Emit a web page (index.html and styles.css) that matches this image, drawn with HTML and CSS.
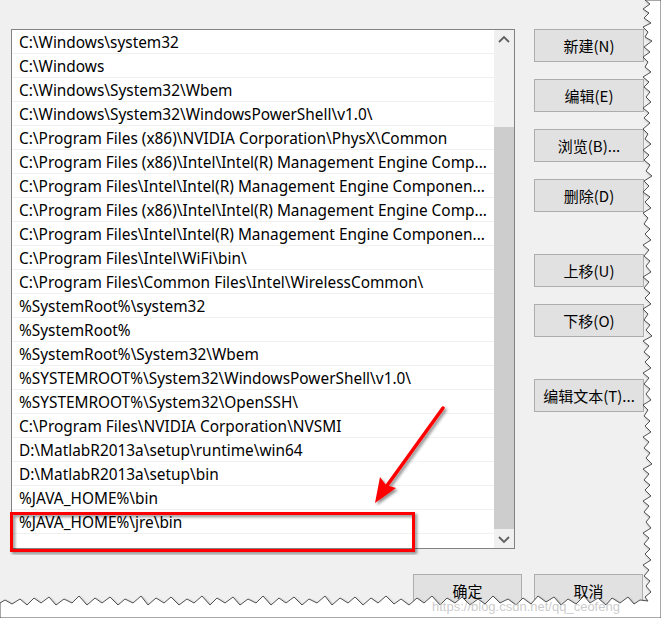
FILE: index.html
```html
<!DOCTYPE html>
<html lang="zh-CN">
<head>
<meta charset="utf-8">
<title>编辑环境变量</title>
<link rel="stylesheet" href="styles.css">
</head>
<body>
<div class="dialog">
  <div class="main">
    <div class="listbox">
      <div class="rows">
        <div class="row">C:\Windows\system32</div>
        <div class="row">C:\Windows</div>
        <div class="row">C:\Windows\System32\Wbem</div>
        <div class="row">C:\Windows\System32\WindowsPowerShell\v1.0\</div>
        <div class="row">C:\Program Files (x86)\NVIDIA Corporation\PhysX\Common</div>
        <div class="row">C:\Program Files (x86)\Intel\Intel(R) Management Engine Comp...</div>
        <div class="row">C:\Program Files\Intel\Intel(R) Management Engine Componen...</div>
        <div class="row">C:\Program Files (x86)\Intel\Intel(R) Management Engine Comp...</div>
        <div class="row">C:\Program Files\Intel\Intel(R) Management Engine Componen...</div>
        <div class="row">C:\Program Files\Intel\WiFi\bin\</div>
        <div class="row">C:\Program Files\Common Files\Intel\WirelessCommon\</div>
        <div class="row">%SystemRoot%\system32</div>
        <div class="row">%SystemRoot%</div>
        <div class="row">%SystemRoot%\System32\Wbem</div>
        <div class="row">%SYSTEMROOT%\System32\WindowsPowerShell\v1.0\</div>
        <div class="row">%SYSTEMROOT%\System32\OpenSSH\</div>
        <div class="row">C:\Program Files\NVIDIA Corporation\NVSMI</div>
        <div class="row">D:\MatlabR2013a\setup\runtime\win64</div>
        <div class="row">D:\MatlabR2013a\setup\bin</div>
        <div class="row">%JAVA_HOME%\bin</div>
        <div class="row">%JAVA_HOME%\jre\bin</div>
        <div class="row"></div>
      </div>
      <div class="scrollbar">
        <div class="arrow">
          <svg width="12" height="8" viewBox="0 0 12 8"><path d="M1 7 L6 2 L11 7" fill="none" stroke="#606060" stroke-width="1.8"/></svg>
        </div>
        <div class="track"><div class="thumb"></div></div>
        <div class="arrow">
          <svg width="12" height="8" viewBox="0 0 12 8"><path d="M1 1 L6 6 L11 1" fill="none" stroke="#606060" stroke-width="1.8"/></svg>
        </div>
      </div>
    </div>
    <div class="side">
      <div class="group">
        <button class="btn">新建(N)</button>
        <button class="btn">编辑(E)</button>
        <button class="btn">浏览(B)...</button>
        <button class="btn">删除(D)</button>
      </div>
      <div class="group">
        <button class="btn">上移(U)</button>
        <button class="btn">下移(O)</button>
      </div>
      <div class="group">
        <button class="btn">编辑文本(T)...</button>
      </div>
    </div>
  </div>
  <div class="footer">
    <button class="btn">确定</button>
    <button class="btn">取消</button>
  </div>

  <svg class="overlay" width="661" height="618" viewBox="0 0 661 618">
    <defs>
      <filter id="sh" x="-10%" y="-10%" width="120%" height="120%">
        <feDropShadow dx="2" dy="2" stdDeviation="1.5" flood-color="#000" flood-opacity="0.45"/>
      </filter>
    </defs>
    <!-- annotation box -->
    <rect x="11.5" y="513.5" width="402" height="37" fill="none" stroke="#ff0000" stroke-width="3" filter="url(#sh)"/>
    <!-- arrow -->
    <g filter="url(#sh)">
      <line x1="443" y1="408" x2="386" y2="487" stroke="#ff0000" stroke-width="3.5" stroke-linecap="round"/>
      <polygon points="375,503 380,477 386,485 396,488" fill="#ff0000"/>
    </g>
    <!-- torn paper edge -->
    <path class="torn" d="M661 0 L645 0 L650 4 L643 9 L649 13 L644 18 L651 23 L643 27 L648 32 L645 37 L652 41 L644 47 L650 52 L643 57 L648 62 L645 67 L651 72 L643 77 L649 82 L644 87 L650 92 L646 97 L651 102 L643 108 L649 113 L644 118 L650 123 L643 129 L648 134 L645 139 L651 144 L643 150 L649 155 L644 160 L650 165 L646 171 L652 176 L644 181 L649 186 L643 192 L650 197 L645 202 L651 208 L643 213 L648 218 L644 224 L650 229 L645 234 L651 240 L643 245 L649 250 L644 256 L650 261 L646 266 L651 272 L643 277 L649 282 L644 288 L650 293 L645 298 L651 304 L643 309 L648 314 L644 320 L650 325 L646 330 L652 336 L643 341 L649 346 L644 352 L650 357 L645 362 L651 368 L643 373 L649 378 L644 384 L650 389 L646 394 L651 400 L643 405 L648 410 L644 416 L650 421 L645 426 L651 432 L643 437 L649 442 L644 448 L650 453 L646 458 L652 464 L643 469 L649 474 L644 480 L650 485 L645 490 L651 496 L643 501 L649 506 L644 512 L650 517 L646 522 L651 528 L643 533 L649 538 L644 544 L650 549 L645 554 L651 560 L643 565 L649 570 L644 576 L650 581 L646 586 L651 592 L645 597 L648 601
      L640 600 L634 604 L628 597 L620 603 L612 598 L606 605 L598 598 L590 603 L584 596 L576 604 L568 599 L561 605 L554 597 L546 602 L538 596 L531 604 L523 598 L516 605 L508 599 L500 603 L493 596 L485 604 L478 599 L470 605 L462 597 L455 603 L447 598 L440 605 L432 596 L424 603 L417 598 L409 605 L401 599 L394 604 L386 596 L378 603 L371 598 L363 605 L355 597 L348 603 L340 598 L332 605 L325 596 L317 603 L309 599 L302 605 L294 597 L286 603 L279 598 L271 605 L263 596 L256 603 L248 599 L240 605 L233 597 L225 603 L217 598 L210 605 L202 596 L194 603 L187 599 L179 605 L171 597 L164 603 L156 598 L148 605 L141 596 L133 603 L125 599 L118 605 L110 597 L102 603 L95 598 L87 605 L79 596 L72 603 L64 599 L56 605 L49 597 L41 603 L34 598 L27 605 L20 599 L12 604 L5 600 L0 603 L0 618 L661 618 Z"/>
  </svg>

  <div class="watermark">https://blog.csdn.net/qq_ceofeng</div>
</div>
</body>
</html>
```
FILE: styles.css
```css
html, body {
  margin: 0;
  padding: 0;
  background: #ffffff;
}

.dialog {
  position: relative;
  width: 661px;
  height: 618px;
  box-sizing: border-box;
  background: #f0f0f0;
  padding: 29px 0 0 11px;
  font-family: "Noto Sans", "Noto Sans CJK SC", sans-serif;
  overflow: hidden;
}

.main {
  display: flex;
  gap: 19px;
  align-items: flex-start;
}

.listbox {
  display: flex;
  width: 504px;
  height: 520px;
  box-sizing: border-box;
  border: 1px solid #828282;
  background: #ffffff;
}

.rows {
  flex: 1;
  overflow: hidden;
}

.row {
  height: 24px;
  box-sizing: border-box;
  border-bottom: 1px solid #f0f0f0;
  padding-left: 7px;
  padding-top: 1px;
  font-size: 15.4px;
  line-height: 23px;
  color: #000000;
  white-space: nowrap;
  overflow: hidden;
}

.scrollbar {
  width: 20px;
  display: flex;
  flex-direction: column;
  background: #f0f0f0;
}

.arrow {
  height: 17px;
  display: flex;
  align-items: center;
  justify-content: center;
}

.track {
  flex: 1;
  padding-top: 80px;
  padding-bottom: 2px;
  display: flex;
}

.thumb {
  flex: 1;
  background: #cdcdcd;
}

.side {
  display: flex;
  flex-direction: column;
  gap: 42px;
}

.group {
  display: flex;
  flex-direction: column;
  gap: 17px;
}

.btn {
  width: 110px;
  height: 33px;
  box-sizing: border-box;
  margin: 0;
  padding: 0;
  background: #e1e1e1;
  border: 1px solid #adadad;
  font-family: "Noto Sans CJK SC", "Noto Sans", sans-serif;
  font-size: 15px;
  color: #000000;
  text-align: center;
}

.footer {
  display: flex;
  gap: 12px;
  margin-top: 25px;
  margin-left: 402px;
}

.footer .btn {
  width: 109px;
}

.watermark {
  position: absolute;
  left: 432px;
  top: 599px;
  font-family: "Liberation Sans", sans-serif;
  font-size: 13px;
  color: rgba(190, 190, 190, 0.8);
  white-space: nowrap;
}

.overlay {
  position: absolute;
  left: 0;
  top: 0;
  pointer-events: none;
}

.torn {
  fill: #ffffff;
  stroke: #505050;
  stroke-width: 1;
  filter: drop-shadow(1px 1px 1px rgba(0,0,0,0.3));
}
```
